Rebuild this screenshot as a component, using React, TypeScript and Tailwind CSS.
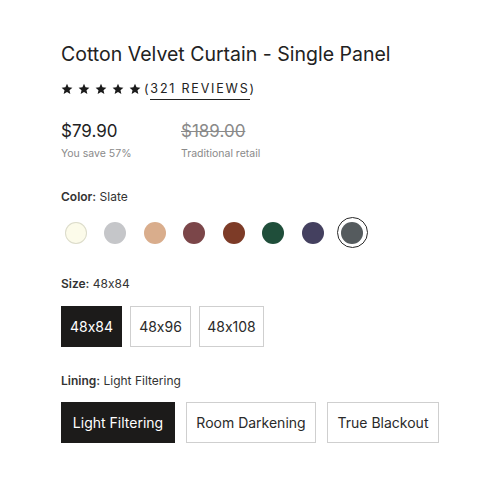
import React, { useState } from "react";

type Swatch = { name: string; hex: string; border?: string };

const swatches: Swatch[] = [
  { name: "Ivory", hex: "#fcfbea", border: "#dcdccc" },
  { name: "Dove", hex: "#c5c6c9" },
  { name: "Blush", hex: "#d9ad8c" },
  { name: "Plum", hex: "#7b4649" },
  { name: "Rust", hex: "#7d3b27" },
  { name: "Forest", hex: "#1f4e3a" },
  { name: "Indigo", hex: "#44405f" },
  { name: "Slate", hex: "#555b5e" },
];

const sizes = ["48x84", "48x96", "48x108"];
const linings = ["Light Filtering", "Room Darkening", "True Blackout"];

function Star() {
  return (
    <svg width="12" height="12" viewBox="0 0 24 24" className="fill-[#1b1b1b]">
      <path d="M12 1.5l3.1 7.1 7.7.7-5.8 5.1 1.7 7.6L12 18l-6.7 4 1.7-7.6-5.8-5.1 7.7-.7z" />
    </svg>
  );
}

function OptionButton({
  label,
  active,
  onClick,
  className,
}: {
  label: string;
  active: boolean;
  onClick: () => void;
  className: string;
}) {
  return (
    <button
      onClick={onClick}
      className={`${className} flex items-center justify-center border text-[14px] ${
        active
          ? "border-[#1c1b1a] bg-[#1c1b1a] text-white"
          : "border-[#cfcfcf] bg-white text-[#2a2a2a]"
      }`}
    >
      {label}
    </button>
  );
}

export default function App() {
  const [color, setColor] = useState("Slate");
  const [size, setSize] = useState("48x84");
  const [lining, setLining] = useState("Light Filtering");

  return (
    <div className="h-[500px] w-[500px] bg-white pl-[61px] pt-[40px] font-['Inter','Liberation_Sans',sans-serif] text-[#222] [font-feature-settings:'calt'_0]">
      <h1 className="text-[19.5px] leading-[28px] font-normal">
        Cotton Velvet Curtain - Single Panel
      </h1>

      <div className="mt-[13px] flex items-center">
        <div className="flex gap-[5px]">
          {Array.from({ length: 5 }).map((_, i) => (
            <Star key={i} />
          ))}
        </div>
        <span className="ml-[3px] text-[12.5px] leading-[16px] tracking-[1.8px] text-[#222]">
          (<span className="border-b border-[#222] pb-[3px]">321 REVIEWS</span>)
        </span>
      </div>

      <div className="mt-[23px] flex">
        <div className="w-[120px]">
          <div className="text-[17px] leading-[22px] text-[#222]">$79.90</div>
          <div className="mt-[5px] text-[10.5px] leading-[14px] text-[#8a8a8a]">You save 57%</div>
        </div>
        <div>
          <div className="text-[17px] leading-[22px] text-[#8a8a8a] line-through">$189.00</div>
          <div className="mt-[5px] text-[10.5px] leading-[14px] text-[#8a8a8a]">Traditional retail</div>
        </div>
      </div>

      <div className="mt-[28px] text-[12px] leading-[16px] text-[#333]">
        <span className="font-semibold">Color:</span> {color}
      </div>

      <div className="mt-[12px] ml-[-1px] flex items-center gap-[8.5px]">
        {swatches.map((s) => {
          const active = s.name === color;
          return (
            <button
              key={s.name}
              onClick={() => setColor(s.name)}
              className={`flex h-[31px] w-[31px] items-center justify-center rounded-full ${
                active ? "border-[1.5px] border-[#2a2a2a]" : "border-[1.5px] border-transparent"
              }`}
            >
              <span
                className="block h-[22px] w-[22px] rounded-full"
                style={{
                  backgroundColor: s.hex,
                  boxShadow: s.border ? `inset 0 0 0 1px ${s.border}` : undefined,
                }}
              />
            </button>
          );
        })}
      </div>

      <div className="mt-[28px] text-[12px] leading-[16px] text-[#333]">
        <span className="font-semibold">Size:</span> {size}
      </div>

      <div className="mt-[14px] flex gap-[8px]">
        {sizes.map((s) => (
          <OptionButton
            key={s}
            label={s}
            active={s === size}
            onClick={() => setSize(s)}
            className={s === "48x108" ? "h-[41px] w-[65px]" : "h-[41px] w-[61px]"}
          />
        ))}
      </div>

      <div className="mt-[26px] text-[12px] leading-[16px] text-[#333]">
        <span className="font-semibold">Lining:</span> {lining}
      </div>

      <div className="mt-[13px] flex gap-[11px]">
        {linings.map((l, i) => (
          <OptionButton
            key={l}
            label={l}
            active={l === lining}
            onClick={() => setLining(l)}
            className={
              i === 0
                ? "h-[41px] w-[114px]"
                : i === 1
                  ? "h-[41px] w-[130px]"
                  : "h-[41px] w-[112px]"
            }
          />
        ))}
      </div>
    </div>
  );
}
